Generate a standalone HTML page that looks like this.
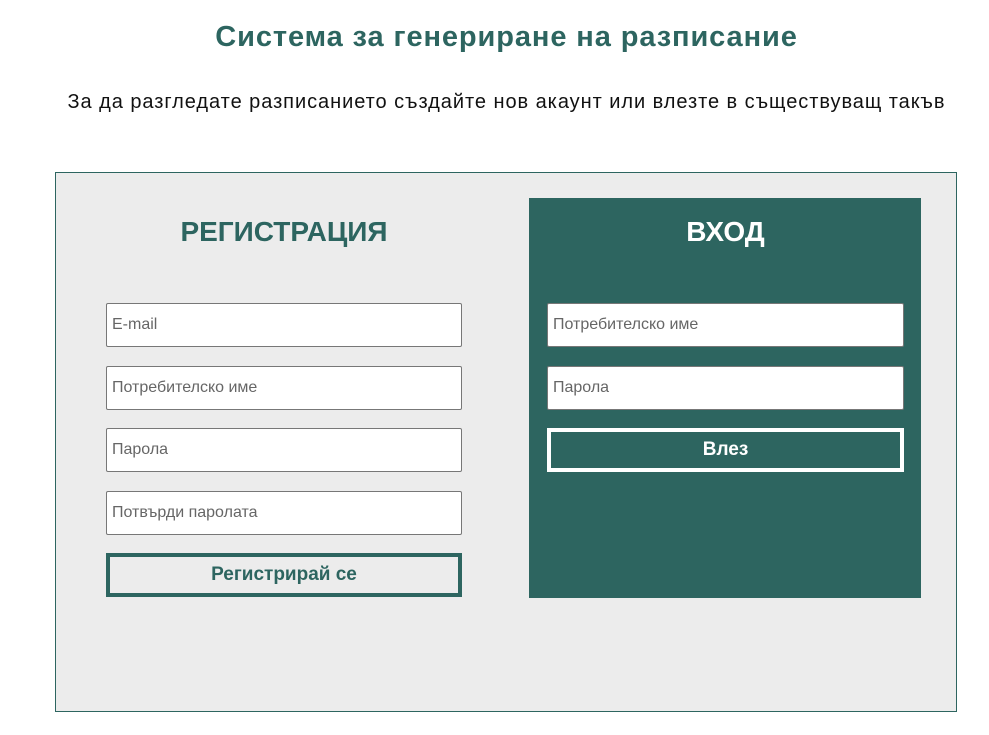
<!DOCTYPE html>
<html><head><meta charset="utf-8"><style>
*{box-sizing:border-box;margin:0;padding:0}
body{width:989px;height:735px;background:#fff;font-family:"Liberation Sans",sans-serif;position:relative;overflow:hidden}
h1{position:absolute;left:0;width:1013px;top:21px;text-align:center;font-size:29px;font-weight:bold;color:#2d6560;letter-spacing:0.9px}
.sub{position:absolute;left:0;width:1013px;top:91px;text-align:center;font-size:20px;color:#111;letter-spacing:0.95px}
.box{position:absolute;left:55px;top:172px;width:902px;height:540px;border:1px solid #2d6560;background:#ececec}
.right{position:absolute;left:529px;top:198px;width:392px;height:400px;background:#2d6560}
.h{position:absolute;font-size:28px;font-weight:bold;text-align:center}
.in{position:absolute;height:44px;background:#fff;border:1px solid #777;border-radius:2px;font-size:16px;color:#666;padding-left:5px;line-height:42px}
.btn{position:absolute;height:44px;font-size:19px;font-weight:bold;text-align:center;line-height:36px}
</style></head><body>
<h1>Система за генериране на разписание</h1>
<div class="sub">За да разгледате разписанието създайте нов акаунт или влезте в съществуващ такъв</div>
<div class="box"></div>
<div class="right"></div>
<div class="h" style="left:106px;width:356px;top:216px;color:#2d6560">РЕГИСТРАЦИЯ</div>
<div class="h" style="left:547px;width:357px;top:216px;color:#fff">ВХОД</div>
<div class="in" style="left:106px;top:303px;width:356px">E-mail</div>
<div class="in" style="left:106px;top:366px;width:356px">Потребителско име</div>
<div class="in" style="left:106px;top:428px;width:356px">Парола</div>
<div class="in" style="left:106px;top:491px;width:356px">Потвърди паролата</div>
<div class="btn" style="left:106px;top:553px;width:356px;border:4px solid #2d6560;color:#2d6560;background:#ececec">Регистрирай се</div>
<div class="in" style="left:547px;top:303px;width:357px">Потребителско име</div>
<div class="in" style="left:547px;top:366px;width:357px">Парола</div>
<div class="btn" style="left:547px;top:428px;width:357px;border:4px solid #fff;color:#fff">Влез</div>
</body></html>
